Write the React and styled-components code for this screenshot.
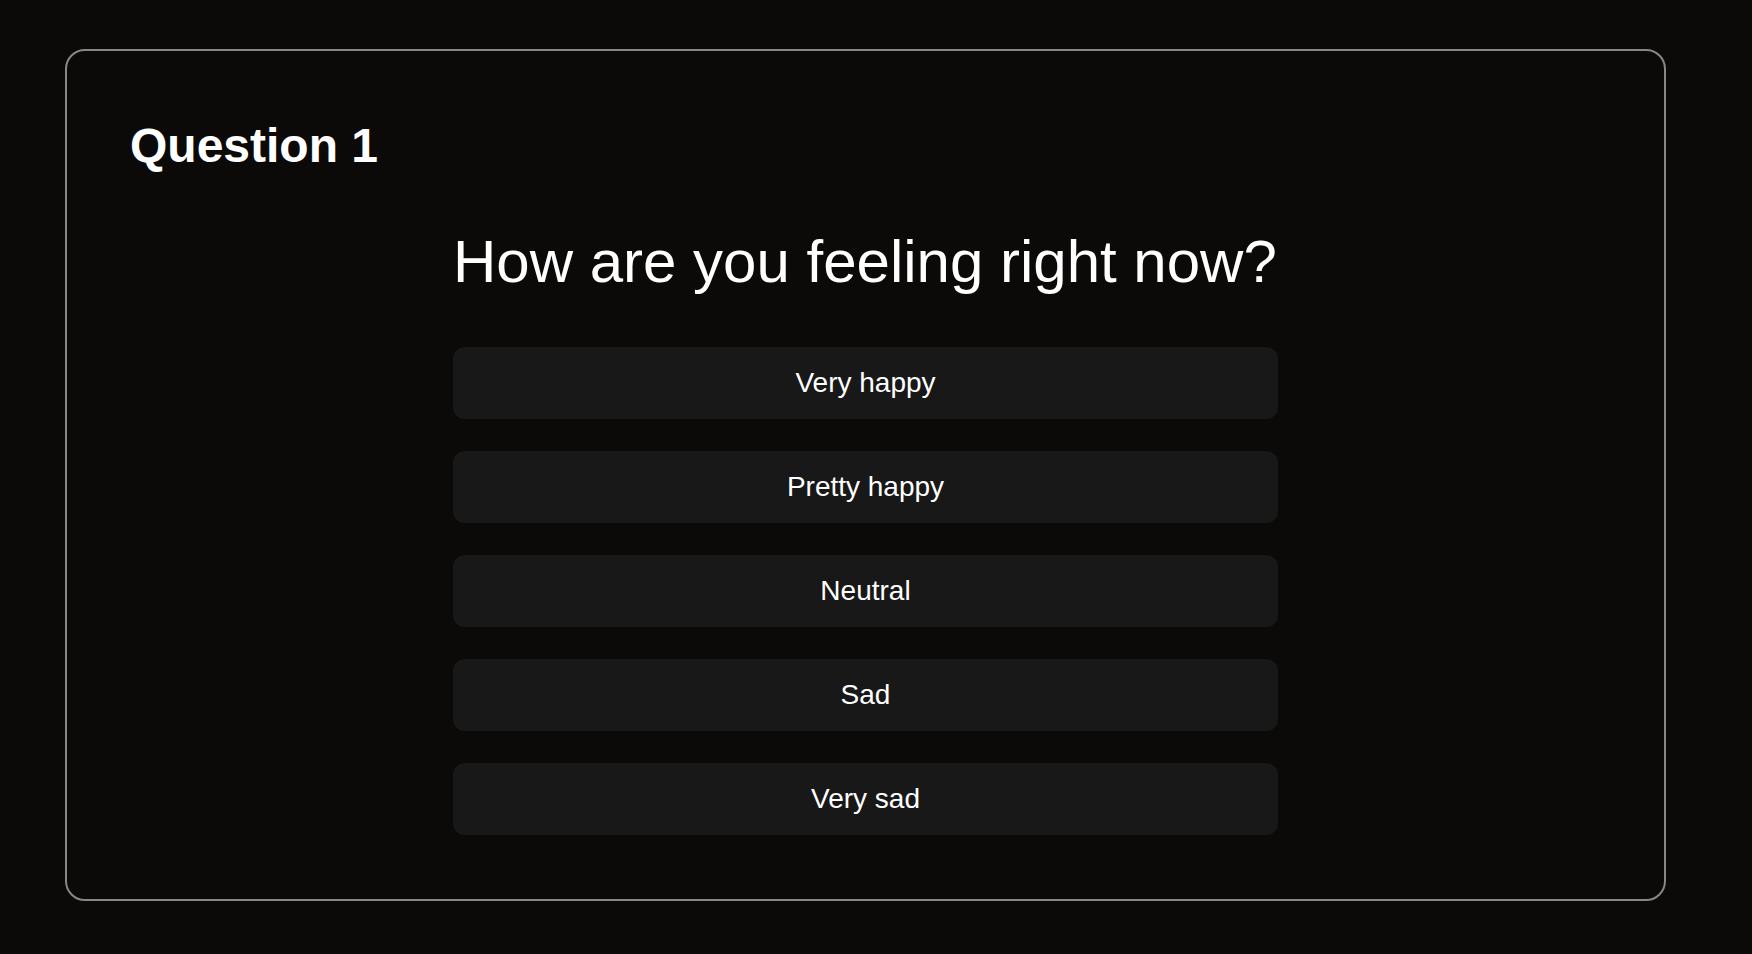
import React, {useState} from "react";
import styled, {createGlobalStyle} from 'styled-components';

const GlobalStyle = createGlobalStyle`
  html, body {
    margin: 0;
    background: #0b0a09;
    font-family: "Liberation Sans", Arial, sans-serif;
    color: #ffffff;
  }
`;

const Page = styled.div`
  min-height: 954px;
  padding: 49px 87px 0 65px;
  box-sizing: border-box;
`;

const Card = styled.section`
  width: 1601px;
  height: 852px;
  box-sizing: border-box;
  border: 2px solid #8a8681;
  border-radius: 20px;
  padding: 67px 63px 64px;
  display: flex;
  flex-direction: column;
`;

const Title = styled.h2`
  margin: 0;
  font-size: 48px;
  font-weight: 700;
  line-height: 56px;
`;

const Body = styled.div`
  width: 825px;
  margin: 53px auto 0;
  display: flex;
  flex-direction: column;
`;

const Prompt = styled.h1`
  margin: 0 0 51px;
  font-size: 60px;
  font-weight: 400;
  line-height: 69px;
`;

const Options = styled.div`
  display: flex;
  flex-direction: column;
  gap: 32px;
`;

const Option = styled.button`
  height: 72px;
  border: none;
  border-radius: 12px;
  background: ${props => props.selected ? '#242424' : '#181818'};
  color: #ffffff;
  font-family: "Liberation Sans", Arial, sans-serif;
  font-size: 28px;
  cursor: pointer;
  padding: 0;
`;

const answers = ['Very happy', 'Pretty happy', 'Neutral', 'Sad', 'Very sad'];

function App() {
  const [picked, setPicked] = useState(null);

  return (
    <Page>
      <GlobalStyle />
      <Card>
        <Title>Question 1</Title>
        <Body>
          <Prompt>How are you feeling right now?</Prompt>
          <Options>
            {answers.map(a => (
              <Option key={a} selected={picked === a} onClick={() => setPicked(a)}>{a}</Option>
            ))}
          </Options>
        </Body>
      </Card>
    </Page>
  )
}

export default App;
